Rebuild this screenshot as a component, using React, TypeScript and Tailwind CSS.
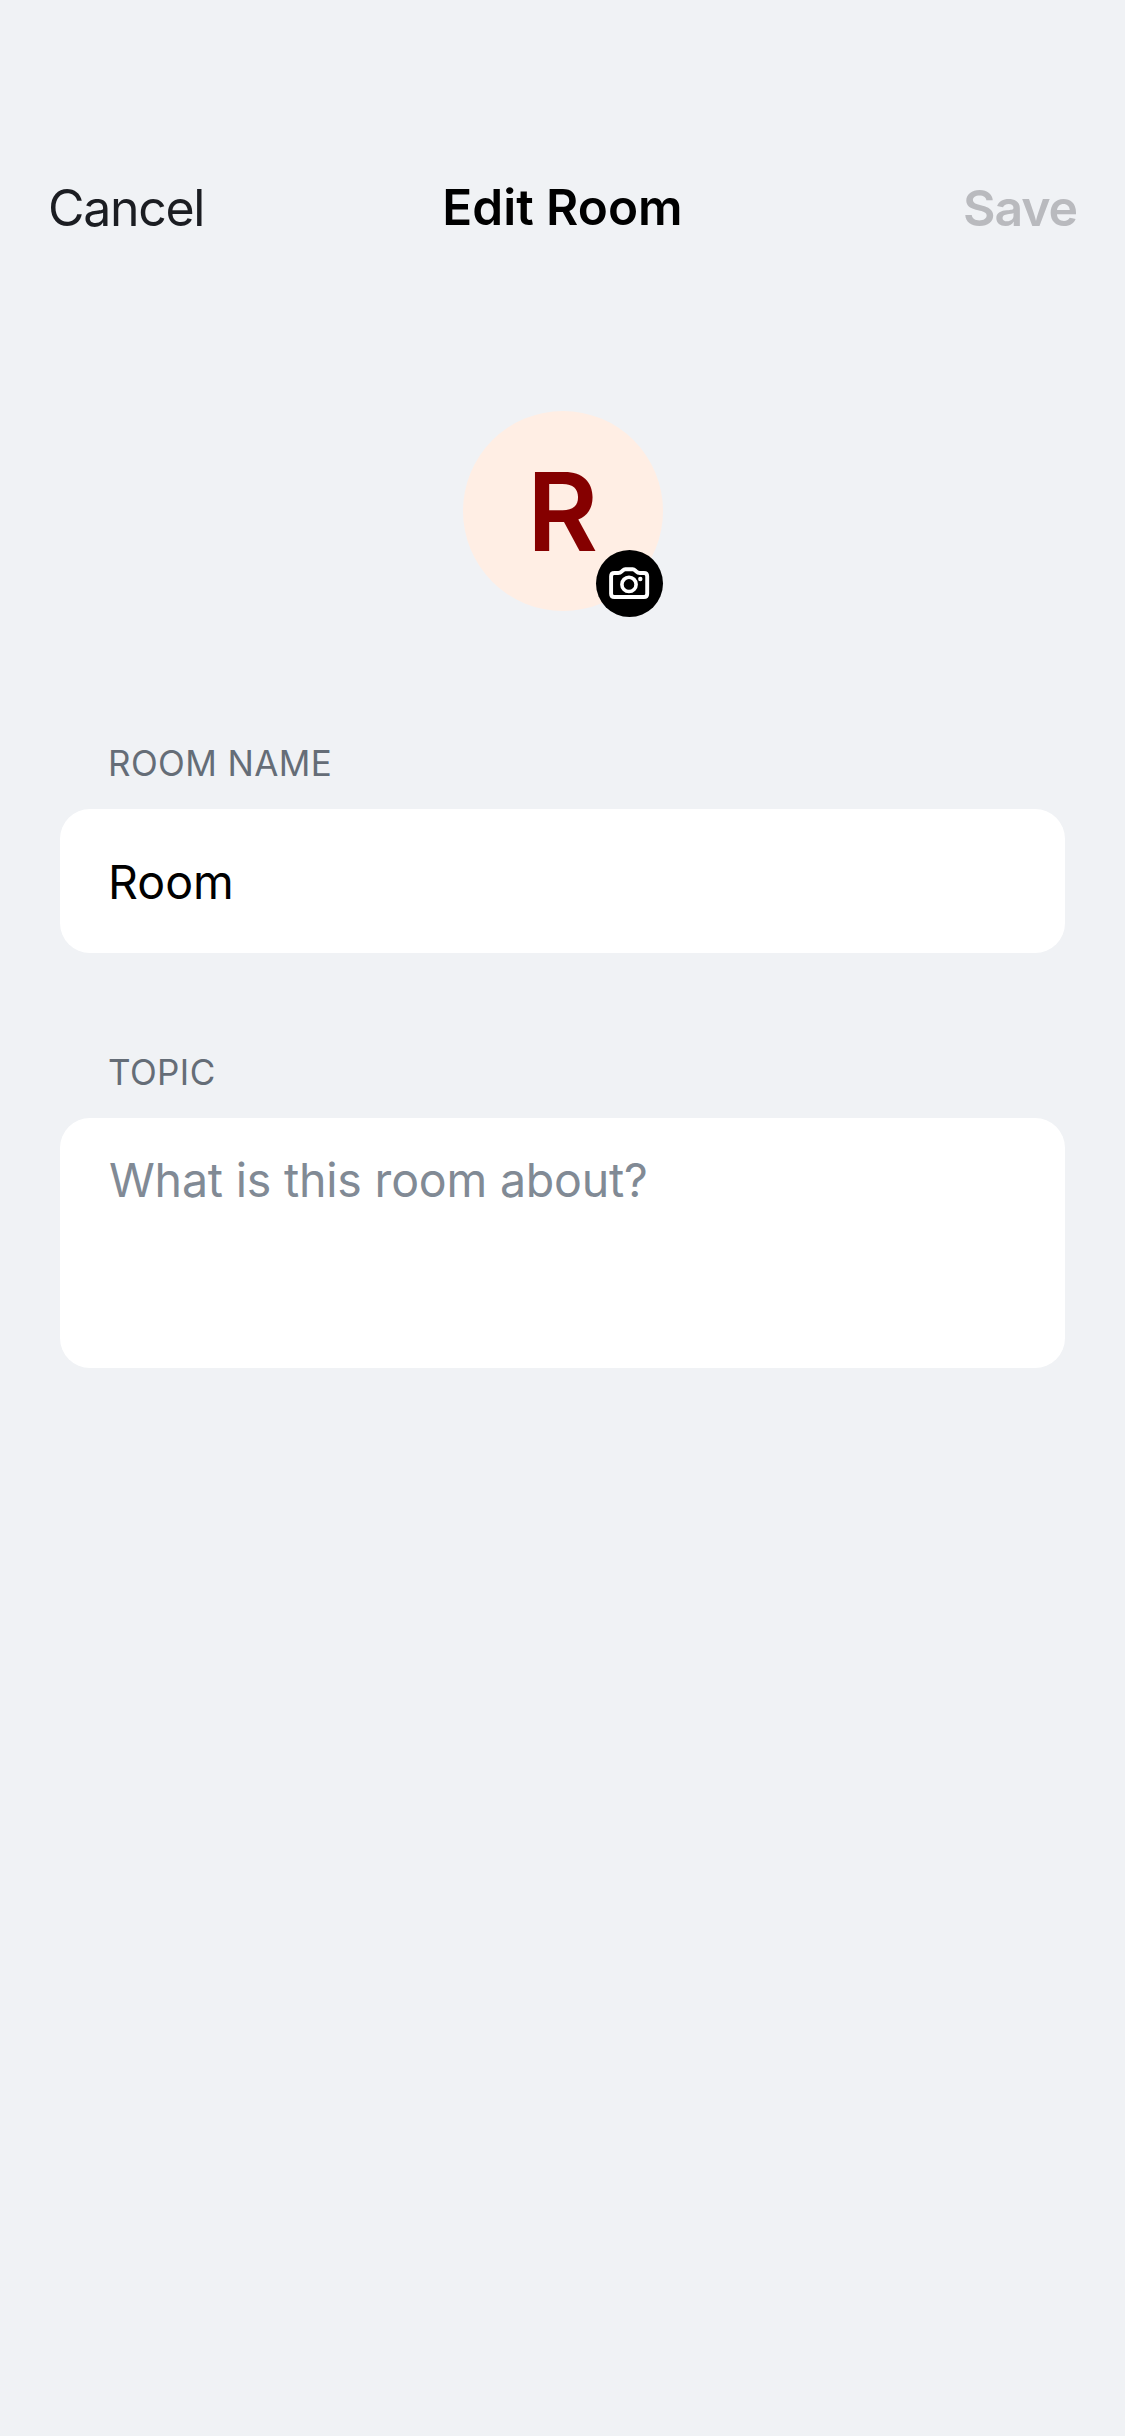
import React from 'react';

function CameraIcon() {
  return (
    <svg viewBox="0 0 67 67" className="size-full" fill="none" stroke="#fff" strokeLinecap="round" strokeLinejoin="round">
      <path
        strokeWidth="3.9"
        d="M18.4 23H22.2C23.6 23 24.6 22.6 25.5 21.7L26.9 20.3C27.6 19.6 28.3 19.3 29.3 19.3H36.7C37.7 19.3 38.4 19.6 39.1 20.3L40.5 21.7C41.4 22.6 42.4 23 43.8 23H47.9C50 23 51.2 24.2 51.2 26.3V43.7C51.2 45.8 50 47 47.9 47H18.4C16.3 47 15.1 45.8 15.1 43.7V26.3C15.1 24.2 16.3 23 18.4 23Z"
      />
      <circle cx="33" cy="34.4" r="7.1" strokeWidth="3.6" />
      <circle cx="44.3" cy="29" r="2.2" fill="#fff" stroke="none" />
    </svg>
  );
}

function Field({ label, className, children }: { label: string; className: string; children: React.ReactNode }) {
  return (
    <section>
      <h2 className="mb-[26px] pl-12 text-[35px] leading-10 tracking-[0.4px] text-[#656d77]">{label}</h2>
      <div className={className}>{children}</div>
    </section>
  );
}

export default function App() {
  return (
    <div className="min-h-[2436px] w-[1125px] bg-[#f0f2f5] font-['Inter',sans-serif]">
      <header className="grid grid-cols-3 px-12 pt-[178px] leading-[60px]">
        <button className="text-left text-[50px] leading-[60px] tracking-[-1.3px] text-[#1b1d22]">Cancel</button>
        <h1 className="-mt-px text-center text-[49.5px] font-semibold text-black">Edit Room</h1>
        <button className="text-right text-[50px] leading-[60px] font-semibold tracking-[-1.1px] text-[#b9babe]">Save</button>
      </header>

      <main className="px-[60px] pt-[173px]">
        <div className="relative mx-auto flex size-[200px] items-center justify-center rounded-full bg-[#ffeee4]">
          <span className="text-[109px] leading-none font-semibold text-[#850000]">R</span>
          <div className="absolute right-0 -bottom-1.5 size-[67px] rounded-full bg-black">
            <CameraIcon />
          </div>
        </div>

        <div className="mt-[132px] flex flex-col gap-[99px]">
          <Field label="ROOM NAME" className="h-36 rounded-[30px] bg-white px-12 pt-[43px] text-[46.5px] leading-[60px] text-black">
            Room
          </Field>
          <Field label="TOPIC" className="h-[250px] rounded-[30px] bg-white px-[49px] pt-8 text-[46.5px] leading-[60px] tracking-[-0.2px] text-[#818a95]">
            What is this room about?
          </Field>
        </div>
      </main>
    </div>
  );
}
